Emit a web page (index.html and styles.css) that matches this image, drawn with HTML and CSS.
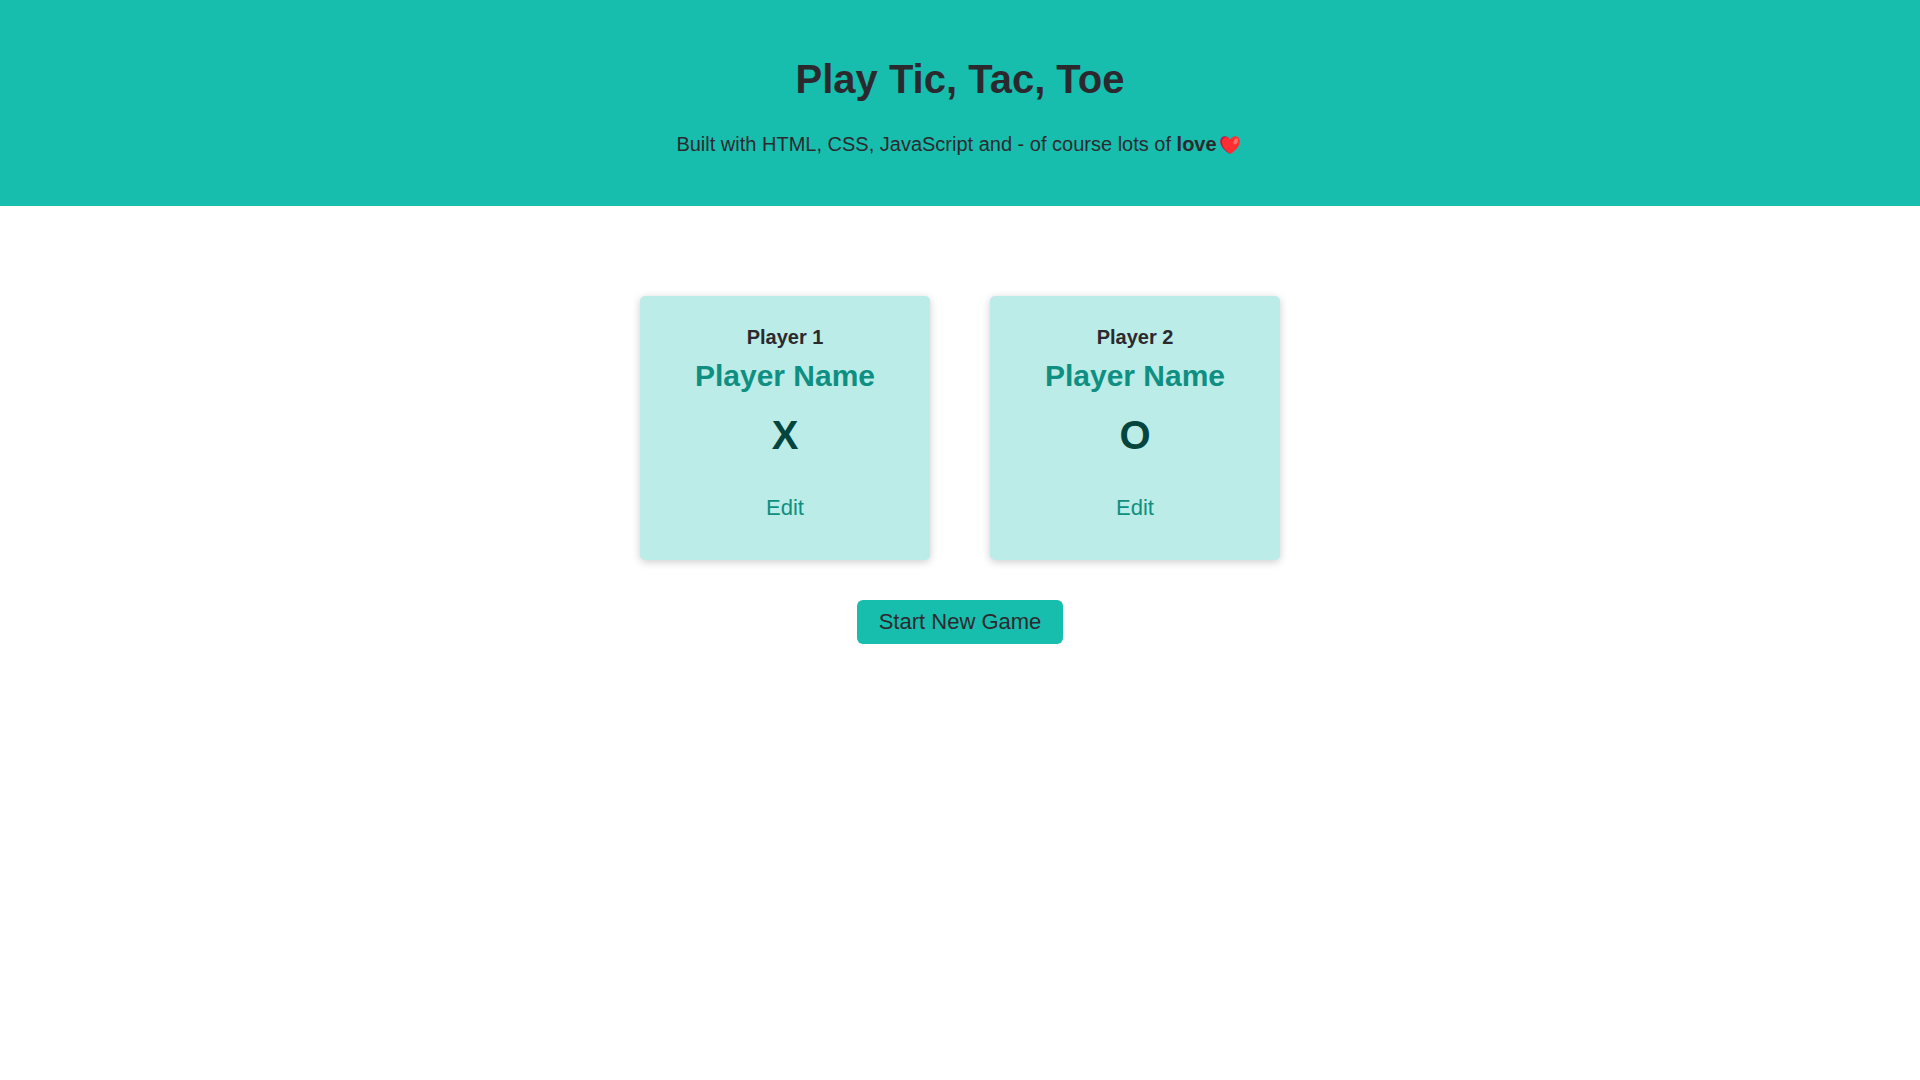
FILE: index.html
```html
<!DOCTYPE html>
<html lang="en">
<head>
  <meta charset="utf-8">
  <meta name="viewport" content="width=device-width, initial-scale=1">
  <title>Play Tic, Tac, Toe</title>
  <link rel="stylesheet" href="styles.css">
</head>
<body>
  <header class="page-header">
    <h1 class="page-title">Play Tic, Tac, Toe</h1>
    <p class="tagline">Built with HTML, CSS, JavaScript and - of course lots of <strong>love</strong><svg class="heart" viewBox="0 0 20 18" role="img" aria-label="heart"><path fill="#cb0f4c" d="M10 18C5.500 15.500.2 10.800.2 5.600.2 2.500 2.200.3 5 .3c2 0 3.400.9 4.500 2.600L13 10z"/><path fill="#fd2f32" d="M10.700 17.800C6.500 15.200 2 10.700 2 6.200 2 3.200 3.700 1.300 6.100 1.300c1.900 0 3.300.9 4.100 2.300C11.300 1.600 13 .3 15.100.3c2.800 0 4.700 2.200 4.700 5.300 0 5-4.900 9.600-9.100 12.200z"/><ellipse cx="15.700" cy="5.500" rx="1.900" ry="3.200" fill="#ff6f68" transform="rotate(28 15.700 5.500)"/></svg></p>
  </header>
  <main class="game">
    <section class="players">
      <article class="player-card">
        <h2 class="player-label">Player 1</h2>
        <h3 class="player-name">Player Name</h3>
        <p class="player-symbol">X</p>
        <button type="button" class="btn btn-alt">Edit</button>
      </article>
      <article class="player-card">
        <h2 class="player-label">Player 2</h2>
        <h3 class="player-name">Player Name</h3>
        <p class="player-symbol">O</p>
        <button type="button" class="btn btn-alt">Edit</button>
      </article>
    </section>
    <button type="button" class="btn btn-main">Start New Game</button>
  </main>
</body>
</html>
```

FILE: styles.css
```css
* {
  box-sizing: border-box;
}

body {
  margin: 0;
  background: #fff;
  color: #2c292e;
  font-family: "Liberation Sans", Arial, sans-serif;
  font-size: 20px;
  text-align: center;
}

h1,
h2,
h3,
p {
  margin: 0;
}

.page-header {
  display: flex;
  flex-direction: column;
  gap: 31px;
  padding: 56px 20px 50px;
  background: #17beae;
}

.page-title {
  font-size: 40px;
  line-height: 46px;
}

.tagline {
  line-height: 23px;
}

.heart {
  width: 20px;
  height: 18px;
  margin: 0 4px 0 3px;
  vertical-align: -3px;
}

.game {
  display: flex;
  flex-direction: column;
  align-items: center;
  gap: 40px;
  padding: 90px 20px;
}

.players {
  display: grid;
  grid-template-columns: repeat(auto-fit, minmax(240px, 1fr));
  gap: 60px;
  width: 100%;
  max-width: 640px;
}

.player-card {
  display: flex;
  flex-direction: column;
  align-items: center;
  padding: 30px 20px;
  border-radius: 5px;
  background: #bbece7;
  box-shadow: 0 2px 8px rgba(0, 0, 0, 0.2);
}

.player-label {
  font-size: 20px;
  line-height: 23px;
}

.player-name {
  margin: 10px 0 20px;
  color: #0f8f82;
  font-size: 30px;
  line-height: 34px;
}

.player-symbol {
  margin-bottom: 28px;
  color: #04453e;
  font-size: 40px;
  font-weight: bold;
  line-height: 45px;
}

.btn {
  padding: 10px 22px;
  border: 0;
  border-radius: 6px;
  font: inherit;
  font-size: 22px;
  line-height: 24px;
  cursor: pointer;
}

.btn-main {
  background: #17beae;
  color: #2c292e;
}

.btn-alt {
  background: transparent;
  color: #0f8f82;
}

.btn-main:hover {
  background: #13ab9d;
}

.btn-alt:hover {
  background: #a5e3dc;
}
```
